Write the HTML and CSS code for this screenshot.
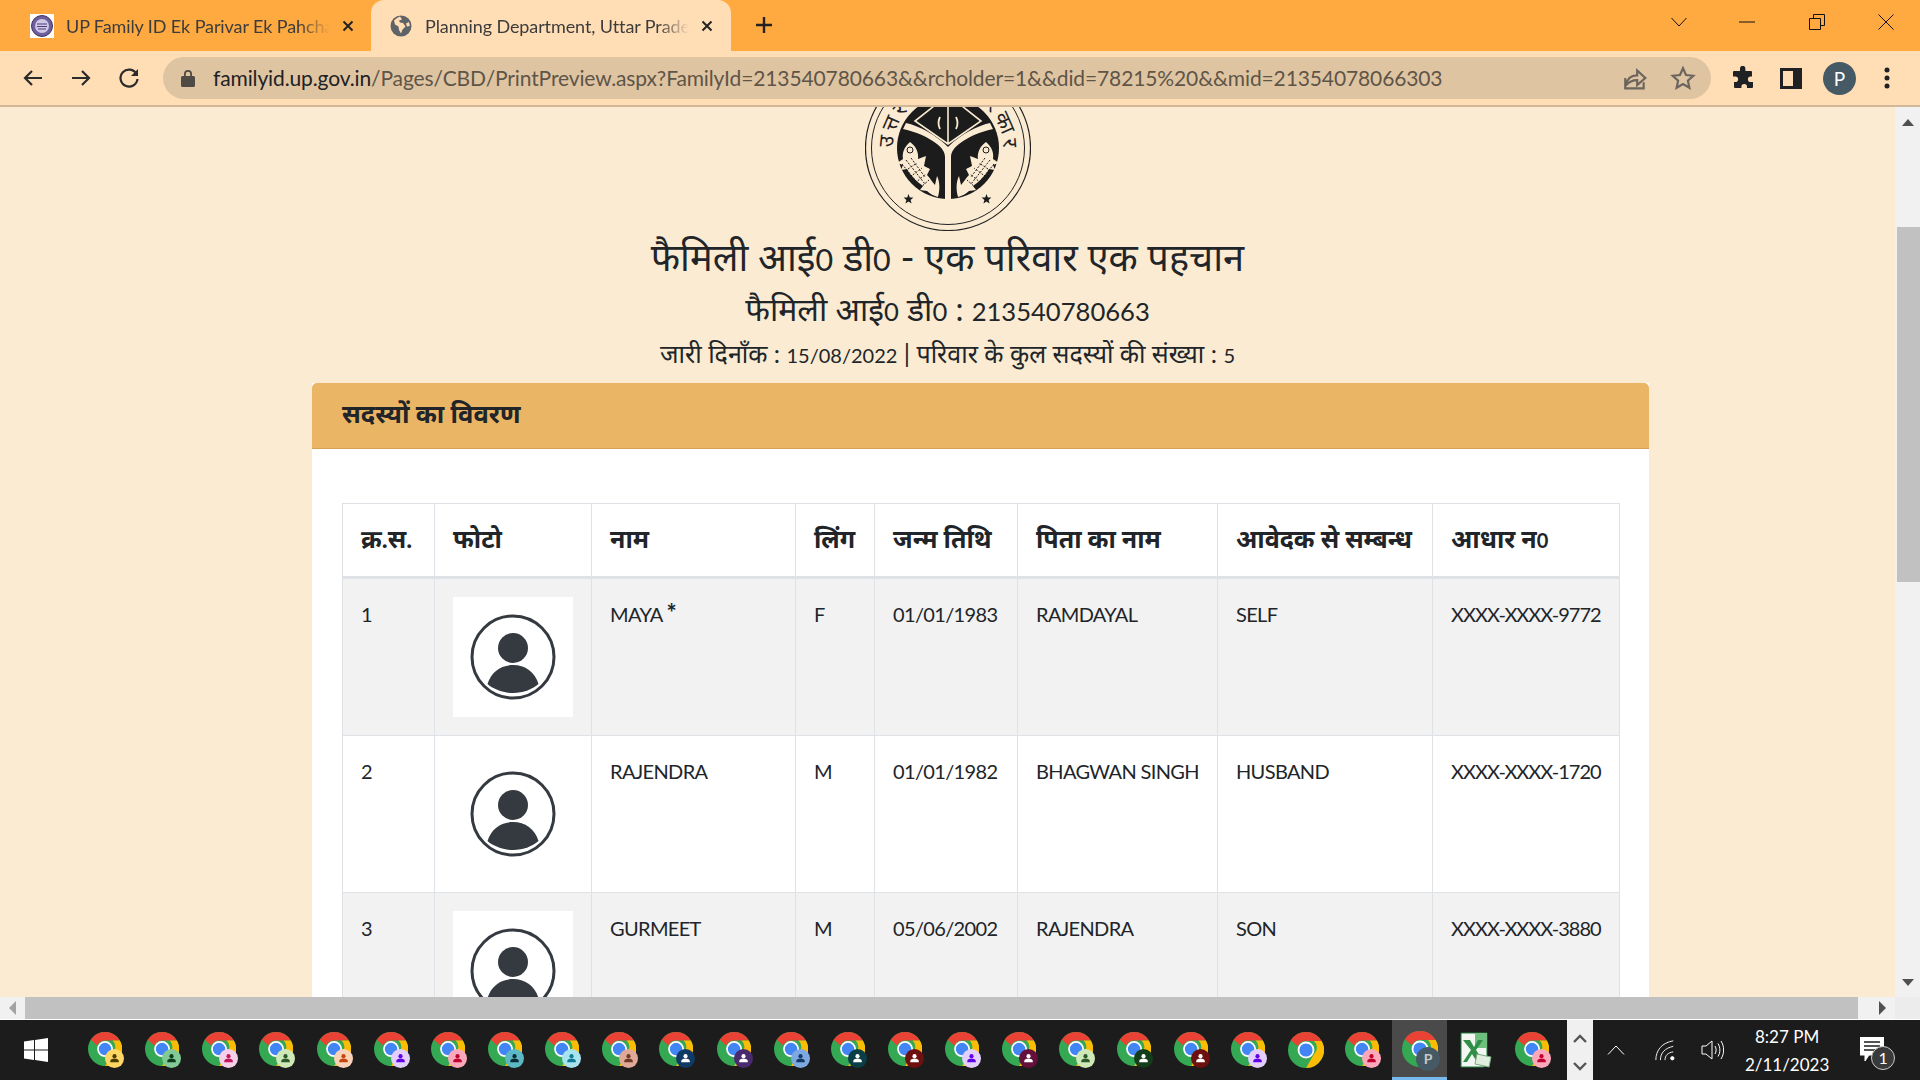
FILE: index.html
```html
<!DOCTYPE html>
<html lang="hi">
<head>
    <meta charset="UTF-8">
    <title>Planning Department, Uttar Pradesh</title>
    <link rel="stylesheet" href="styles.css">
</head>
<body>
    <svg class="defs" width="0" height="0">
        <symbol id="chrome" viewBox="0 0 36 36">
            <circle cx="18" cy="18" r="18" fill="#34a853"/>
            <path d="M18 0a18 18 0 0 1 15.600 9H18a9 9 0 0 0-8.200 5.200L2.900 8.200A18 18 0 0 1 18 0z" fill="#ea4335"/>
            <path d="M33.600 9A18 18 0 0 1 18 36l7.800-13.500A9 9 0 0 0 26 9z" fill="#fbbc04"/>
            <circle cx="18" cy="18" r="8.400" fill="#fff"/>
            <circle cx="18" cy="18" r="6.600" fill="#4285f4"/>
        </symbol>
        <symbol id="badged" viewBox="0 0 38 38">
            <use href="#chrome" width="36" height="36"/>
            <circle class="badge-bg" cx="28" cy="28" r="10"/>
            <circle class="badge-ink" cx="28" cy="25.500" r="2.200"/>
            <path class="badge-ink" d="M23.500 32v-1.500c0-1.500 2-2.500 4.500-2.500s4.500 1 4.500 2.500V32z"/>
        </symbol>
        <symbol id="person" viewBox="0 0 120 120">
            <circle cx="60" cy="60" r="41" fill="#fff" stroke="#343a40" stroke-width="3"/>
            <ellipse cx="60" cy="51" rx="15" ry="15" fill="#343a40"/>
            <path d="M34.500 87C38 75 48 68 60 68s22 7 25.500 19C80 92 70 96 60 96s-20-4-25.500-9z" fill="#343a40"/>
        </symbol>
        <symbol id="fish" viewBox="0 0 166 166">
            <path d="M45 77c6 4 9 11 8 17l8-3-2 10 6 3-3 6c3 3 6 8 8 10l2-9c3 6 3 14 1 21-4-1-8-3-11-6l-7-1 3-4c-6-4-13-11-16-17l-6 1 2-5-6-2 6-4c-1-6 1-12 7-17z" fill="#faebd2"/>
            <circle cx="45" cy="85" r="3" fill="none" stroke="#1c1c1c" stroke-width="1"/>
            <path d="M41 95l19 24M46 93l14 19M37 99l18 22M40 106l12-8M45 112l12-9M50 118l11-9M55 123l9-8" fill="none" stroke="#1c1c1c" stroke-width="1" stroke-dasharray="2 1.500"/>
        </symbol>
    </svg>

    <div class="tabstrip">
        <div class="tab">
            <svg class="favicon" viewBox="0 0 24 24"><rect width="24" height="24" fill="#fff"/><circle cx="12" cy="12" r="10.500" fill="#6f5f9e" stroke="#3c3560"/><circle cx="12" cy="12" r="7" fill="#cfc8e6"/><path d="M7 10h10M7 12.500h10M8 15h8" stroke="#4a3f7a" stroke-width="1.200"/></svg>
            <span class="tab-title">UP Family ID Ek Parivar Ek Pahchan Patra</span>
            <svg class="tab-close" viewBox="0 0 12 12"><path d="M1.500 1.500l9 9M10.500 1.500l-9 9"/></svg>
        </div>
        <div class="tab tab-active">
            <svg class="favicon" viewBox="0 0 24 24"><circle cx="12" cy="12" r="10.500" fill="#5f6368"/><path d="M11 2.500C8 4 6.500 5 5 6.500l1 4 3.500 2 .5 3.500 2 3.500 1.500-4 3-3-2.500-3.500-3-.5L10 6.500l3-1zM20 8l-3 1.500 1 3 2.800-.5z" fill="#ffddb5"/></svg>
            <span class="tab-title">Planning Department, Uttar Pradesh</span>
            <svg class="tab-close" viewBox="0 0 12 12"><path d="M1.500 1.500l9 9M10.500 1.500l-9 9"/></svg>
        </div>
        <svg class="new-tab" viewBox="0 0 18 18"><path d="M9 1v16M1 9h16"/></svg>
        <div class="window-btns">
            <svg class="win-chevron" viewBox="0 0 16 10"><path d="M.500 1l7.500 8 7.500-8"/></svg>
            <svg class="win-min" viewBox="0 0 16 2"><path d="M0 1h16"/></svg>
            <svg class="win-restore" viewBox="0 0 16 16"><path d="M.500 4.500h11v11H.500zM4.500 4.500V.500h11v11h-4"/></svg>
            <svg class="win-close" viewBox="0 0 16 16"><path d="M.500.500l15 15M15.500.500l-15 15"/></svg>
        </div>
    </div>

    <div class="toolbar">
        <svg class="nav-icon" viewBox="0 0 24 24"><path d="M21 12H4M11 5l-7 7 7 7"/></svg>
        <svg class="nav-icon" viewBox="0 0 24 24"><path d="M3 12h17M13 5l7 7-7 7"/></svg>
        <svg class="nav-icon" viewBox="0 0 24 24"><path d="M19.500 8A8.500 8.500 0 1 0 20.500 13"/><path class="solid" d="M21 3v7h-7z"/></svg>
        <div class="omnibox">
            <svg class="lock" viewBox="0 0 14 18"><path d="M3 7V5a4 4 0 0 1 8 0v2h1.500A1.500 1.500 0 0 1 14 8.500v8a1.500 1.500 0 0 1-1.500 1.500h-11A1.500 1.500 0 0 1 0 16.500v-8A1.500 1.500 0 0 1 1.500 7zm1.800 0h4.400V5a2.200 2.200 0 0 0-4.400 0z"/></svg>
            <span class="url"><b>familyid.up.gov.in</b>/Pages/CBD/PrintPreview.aspx?FamilyId=213540780663&amp;&amp;rcholder=1&amp;&amp;did=78215%20&amp;&amp;mid=21354078066303</span>
            <svg class="omni-icon" viewBox="0 0 24 24"><path d="M3 12v9.500h17V16M3.500 19c1-6 5-9.500 10.500-9.500V5l7.500 7-7.500 6.500V14c-4 0-7.500 1.500-10.500 5z"/></svg>
            <svg class="omni-icon" viewBox="0 0 24 24"><path d="M12 3l2.800 6.200 6.700.7-5 4.500 1.400 6.600L12 17.600 6.100 21l1.400-6.600-5-4.500 6.700-.7z"/></svg>
        </div>
        <svg class="ext-icon" viewBox="0 0 24 24"><path d="M9 2.500a2.700 2.700 0 0 1 5.400 0V5H20a1 1 0 0 1 1 1v4.500h-1.300a2.800 2.800 0 0 0 0 5.600H22V21a1 1 0 0 1-1 1h-5v-1.300a2.800 2.800 0 0 0-5.600 0V22H4a1 1 0 0 1-1-1v-5h1.300a2.800 2.800 0 0 0 0-5.600H2V6a1 1 0 0 1 1-1h6z"/></svg>
        <svg class="panel-icon" viewBox="0 0 22 21"><path fill-rule="evenodd" d="M0 0h22v21H0zM3 3v15h10V3z"/></svg>
        <span class="avatar">P</span>
        <svg class="dots" viewBox="0 0 6 22"><circle cx="3" cy="3" r="2.500"/><circle cx="3" cy="11" r="2.500"/><circle cx="3" cy="19" r="2.500"/></svg>
    </div>

    <div class="viewport">
        <div class="page">
            <div class="head">
                <svg class="emblem" viewBox="0 0 166 166">
                    <defs><path id="ring" d="M28 83a55 55 0 1 1 110 0"/></defs>
                    <circle cx="83" cy="83" r="82.500" fill="none" stroke="#222" stroke-width="1.200"/>
                    <circle cx="83" cy="83" r="76.500" fill="none" stroke="#222" stroke-width="1"/>
                    <text class="emblem-text"><textPath href="#ring" startOffset="50%" text-anchor="middle" textLength="172">उत्तर प्रदेश सरकार</textPath></text>
                    <circle cx="83" cy="83" r="51" fill="#1c1c1c"/>
                    <path d="M80 134V92c0-5-3-9-8-13-9-7-20-12-34-15l3-6c13 3 29 11 42 24 13-13 29-21 42-24l3 6c-14 3-25 8-34 15-5 4-8 8-8 13v42z" fill="#faebd2"/>
                    <path d="M83 79L50 56l33-26 33 26zM83 30v49" fill="none" stroke="#faebd2" stroke-width="1.600"/>
                    <path d="M75 52c-2 4-2 8 0 12M91 52c2 4 2 8 0 12" fill="none" stroke="#faebd2" stroke-width="1.800"/>
                    <use href="#fish" width="166" height="166"/>
                    <use href="#fish" width="166" height="166" transform="matrix(-1 0 0 1 166 0)"/>
                    <path d="M43.500 129l1.300 3.400 3.600.200-2.800 2.300 1 3.500-3.100-2-3.100 2 1-3.500-2.800-2.300 3.600-.200zM121.500 129l1.300 3.400 3.600.200-2.800 2.300 1 3.500-3.100-2-3.100 2 1-3.500-2.800-2.300 3.600-.200z" fill="#1c1c1c"/>
                </svg>
                <h1 class="title">फैमिली आई<span class="lat">0</span> डी<span class="lat">0</span> - एक परिवार एक पहचान</h1>
                <h2 class="subtitle">फैमिली आई<span class="lat">0</span> डी<span class="lat">0</span> : <span class="lat">213540780663</span></h2>
                <h3 class="issue">जारी दिनाँक : <span class="lat">15/08/2022</span> | परिवार के कुल सदस्यों की संख्या : <span class="lat">5</span></h3>
            </div>

            <div class="card">
                <div class="card-header">सदस्यों का विवरण</div>
                <div class="card-body">
                    <table class="members">
                        <thead>
                            <tr>
                                <th class="c-no">क्र.स.</th>
                                <th class="c-photo">फोटो</th>
                                <th class="c-name">नाम</th>
                                <th class="c-sex">लिंग</th>
                                <th class="c-dob">जन्म तिथि</th>
                                <th class="c-father">पिता का नाम</th>
                                <th class="c-rel">आवेदक से सम्बन्ध</th>
                                <th class="c-aadhaar">आधार न<span class="lat">0</span></th>
                            </tr>
                        </thead>
                        <tbody>
                            <tr>
                                <td>1</td>
                                <td><svg class="photo"><use href="#person"/></svg></td>
                                <td>MAYA <b class="star">*</b></td>
                                <td>F</td>
                                <td>01/01/1983</td>
                                <td>RAMDAYAL</td>
                                <td>SELF</td>
                                <td class="aadhaar">XXXX-XXXX-9772</td>
                            </tr>
                            <tr>
                                <td>2</td>
                                <td><svg class="photo"><use href="#person"/></svg></td>
                                <td>RAJENDRA</td>
                                <td>M</td>
                                <td>01/01/1982</td>
                                <td>BHAGWAN SINGH</td>
                                <td>HUSBAND</td>
                                <td class="aadhaar">XXXX-XXXX-1720</td>
                            </tr>
                            <tr>
                                <td>3</td>
                                <td><svg class="photo"><use href="#person"/></svg></td>
                                <td>GURMEET</td>
                                <td>M</td>
                                <td>05/06/2002</td>
                                <td>RAJENDRA</td>
                                <td>SON</td>
                                <td class="aadhaar">XXXX-XXXX-3880</td>
                            </tr>
                        </tbody>
                    </table>
                </div>
            </div>
        </div>
        <div class="vscroll">
            <span class="arrow-up"></span>
            <div class="vthumb"></div>
            <span class="arrow-down"></span>
        </div>
    </div>

    <div class="hscroll">
        <span class="arrow-left"></span>
        <div class="hthumb"></div>
        <span class="arrow-right"></span>
        <div class="corner"></div>
    </div>

    <div class="taskbar">
        <svg class="win-logo" viewBox="0 0 24 24"><path d="M0 3.400l10-1.400v9.400H0zM11 1.900L24 0v11.400H11zM0 12.600h10V22L0 20.600zM11 12.600h13V24l-13-1.900z"/></svg>
        <div class="apps">
            <svg class="app b-yellow"><use href="#badged"/></svg>
            <svg class="app b-green"><use href="#badged"/></svg>
            <svg class="app b-pink"><use href="#badged"/></svg>
            <svg class="app b-lime"><use href="#badged"/></svg>
            <svg class="app b-peach"><use href="#badged"/></svg>
            <svg class="app b-lav"><use href="#badged"/></svg>
            <svg class="app b-rose"><use href="#badged"/></svg>
            <svg class="app b-teal"><use href="#badged"/></svg>
            <svg class="app b-sky"><use href="#badged"/></svg>
            <svg class="app b-tan"><use href="#badged"/></svg>
            <svg class="app b-navy"><use href="#badged"/></svg>
            <svg class="app b-plum"><use href="#badged"/></svg>
            <svg class="app b-blue"><use href="#badged"/></svg>
            <svg class="app b-deep"><use href="#badged"/></svg>
            <svg class="app b-red"><use href="#badged"/></svg>
            <svg class="app b-lav"><use href="#badged"/></svg>
            <svg class="app b-wine"><use href="#badged"/></svg>
            <svg class="app b-lime"><use href="#badged"/></svg>
            <svg class="app b-forest"><use href="#badged"/></svg>
            <svg class="app b-red"><use href="#badged"/></svg>
            <svg class="app b-lav"><use href="#badged"/></svg>
            <svg class="app"><use href="#chrome"/></svg>
            <svg class="app b-rose"><use href="#badged"/></svg>
        </div>
        <div class="app-active">
            <svg class="app"><use href="#chrome"/></svg>
            <span class="active-badge">P</span>
        </div>
        <svg class="excel" viewBox="0 0 36 36">
            <path d="M4 1h26v26l-3 8H4z" fill="#f2f7f2" stroke="#1e7a3c"/>
            <path d="M18 1h12v15H18z" fill="#6fbf7f"/>
            <path d="M6 8h7l4 7 4-7h5l-7 10 8 12h-7l-5-8-5 8H6l8-12z" fill="#2f8f46"/>
            <path d="M20 22l14 3-2 10-14-3z" fill="#dfeedd" stroke="#7dab80"/>
        </svg>
        <svg class="app b-rose"><use href="#badged"/></svg>
        <div class="task-scroll">
            <svg viewBox="0 0 14 9"><path d="M1 8l6-6 6 6"/></svg>
            <svg viewBox="0 0 14 9"><path d="M1 1l6 6 6-6"/></svg>
        </div>
        <div class="tray">
            <svg class="tray-chevron" viewBox="0 0 18 10"><path d="M1 9.500l8-8.500 8 8.500"/></svg>
            <svg class="tray-wifi" viewBox="0 0 24 24"><path d="M2 23C2 12 9 4 21 2M7 23c0-8 5-13 14-15M12 23c0-5 3-8 9-9"/><circle cx="20" cy="21" r="1.800" class="solid"/></svg>
            <svg class="tray-sound" viewBox="0 0 24 24"><path d="M2 8h4l6-5v18l-6-5H2zM15 8c1.500 2.500 1.500 5.500 0 8M18 5.500c2.500 4 2.500 9 0 13M21 3c3.500 5.500 3.500 12.500 0 18"/></svg>
            <div class="clock">
                <span>8:27 PM</span>
                <span>2/11/2023</span>
            </div>
            <div class="notify">
                <svg viewBox="0 0 24 26"><path d="M0 0h24v18H9l-4 6v-6H0z" fill="#fff"/><path d="M4 5h16M4 9h16M4 13h12" stroke="#1c1c1c" stroke-width="1.400"/></svg>
                <span class="notify-count">1</span>
            </div>
        </div>
    </div>
</body>
</html>
```

FILE: styles.css
```css
* {
    box-sizing: border-box;
}
html, body {
    margin: 0;
    height: 100%;
    overflow: hidden;
}
body {
    display: flex;
    flex-direction: column;
    font-family: Lato, "Noto Sans", "Noto Sans Devanagari", sans-serif;
    color: #212529;
    background: #faebd2;
}
.defs {
    position: absolute;
}
svg {
    flex: none;
    display: block;
}

/* browser tabs */
.tabstrip {
    height: 51px;
    flex: none;
    background: #ffaa40;
    display: flex;
    align-items: stretch;
    padding-left: 16px;
    position: relative;
}
.tab {
    width: 355px;
    display: flex;
    align-items: center;
    padding-left: 14px;
    color: #3c3c3c;
    font-size: 18px;
    letter-spacing: -0.1px;
}
.tab-active {
    width: 360px;
    background: #ffddb5;
    border-radius: 13px 13px 0 0;
    padding-left: 18px;
}
.favicon {
    width: 24px;
    height: 24px;
    margin-right: 12px;
}
.tab-title {
    width: 264px;
    white-space: nowrap;
    overflow: hidden;
    -webkit-mask-image: linear-gradient(to right, #000 88%, transparent);
    mask-image: linear-gradient(to right, #000 88%, transparent);
}
.tab-close {
    width: 12px;
    height: 12px;
    margin-left: 12px;
    fill: none;
    stroke: #222;
    stroke-width: 2;
}
.new-tab {
    width: 18px;
    height: 18px;
    margin: 16px 0 0 24px;
    fill: none;
    stroke: #222;
    stroke-width: 2.400;
}
.window-btns {
    margin-left: auto;
    display: flex;
    align-items: center;
    padding-bottom: 8px;
}
.window-btns svg {
    fill: none;
    stroke: #111;
    stroke-width: 1;
}
.win-chevron {
    width: 16px;
    height: 10px;
}
.win-min {
    width: 16px;
    height: 2px;
    margin-left: 52px;
}
.win-restore {
    width: 16px;
    height: 16px;
    margin-left: 54px;
}
.win-close {
    width: 16px;
    height: 16px;
    margin: 0 26px 0 53px;
}

/* address bar */
.toolbar {
    height: 56px;
    flex: none;
    background: #ffddb5;
    border-bottom: 2px solid #d2b899;
    display: flex;
    align-items: center;
    padding-left: 21px;
}
.nav-icon {
    width: 24px;
    height: 24px;
    margin-right: 24px;
    fill: none;
    stroke: #2b2b2b;
    stroke-width: 2.200;
}
.nav-icon .solid {
    fill: #2b2b2b;
    stroke: none;
}
.omnibox {
    width: 1548px;
    height: 42px;
    margin-left: -2px;
    background: #dfc4a2;
    border-radius: 21px;
    display: flex;
    align-items: center;
    padding-left: 18px;
}
.lock {
    width: 14px;
    height: 18px;
    fill: #4f4a44;
    margin-right: 18px;
}
.url {
    width: 1387px;
    padding-bottom: 1px;
    font-size: 21px;
    letter-spacing: -0.12px;
    color: #5e5548;
    white-space: nowrap;
}
.url b {
    font-weight: 400;
    color: #202124;
}
.omni-icon {
    width: 26px;
    height: 26px;
    margin-left: 22px;
    fill: none;
    stroke: #6b655e;
    stroke-width: 2;
}
.ext-icon {
    width: 24px;
    height: 24px;
    margin-left: 20px;
    fill: #202124;
}
.panel-icon {
    width: 22px;
    height: 21px;
    margin-left: 25px;
    fill: #202124;
}
.avatar {
    width: 33px;
    height: 33px;
    margin-left: 21px;
    border-radius: 50%;
    background: #455a64;
    color: #fff;
    font-size: 19px;
    line-height: 33px;
    text-align: center;
}
.dots {
    width: 6px;
    height: 22px;
    margin-left: 28px;
    fill: #202124;
}

/* page content, scrolled down a little */
.viewport {
    flex: 1;
    min-height: 0;
    display: flex;
}
.page {
    flex: 1;
    min-width: 0;
    overflow: hidden;
    background: #faebd2;
}
.head {
    text-align: center;
}
.emblem {
    width: 166px;
    height: 166px;
    margin: -42px auto -1px;
}
.emblem-text {
    font-size: 21px;
    fill: #222;
}
.lat {
    font-size: 0.8em;
}
.title {
    margin: 0;
    font-size: 38px;
    font-weight: 400;
    line-height: 52px;
}
.subtitle {
    margin: 1px 0 0;
    font-size: 32px;
    font-weight: 400;
    line-height: 46px;
}
.issue {
    margin: -1px 0 0;
    font-size: 25px;
    font-weight: 400;
    line-height: 40px;
}
.card {
    width: 1337px;
    margin: 8px 0 0 312px;
    background: #fff;
}
.card-header {
    height: 66px;
    padding: 0 30px 8px;
    background: #eab665;
    border-bottom: 1px solid #d5a055;
    border-radius: 5px 5px 0 0;
    font-size: 25.500px;
    font-weight: 700;
    line-height: 60px;
}
.card-body {
    padding: 54px 30px 0;
}
.members {
    width: 100%;
    border-collapse: collapse;
    table-layout: fixed;
    font-size: 20px;
    white-space: nowrap;
}
.members th, .members td {
    border: 1px solid #dee2e6;
    padding: 18px;
    text-align: left;
    vertical-align: top;
    font-weight: 400;
}
.members th {
    height: 74px;
    padding-top: 16px;
    font-size: 25px;
    font-weight: 700;
    line-height: 36px;
    border-bottom: 3px solid #dee2e6;
}
.members td {
    height: 157px;
    padding-top: 17px;
    line-height: 36px;
    letter-spacing: -0.65px;
}
.members td.aadhaar {
    letter-spacing: -1px;
}
.star {
    font-size: 24px;
    line-height: 20px;
}
.members tbody tr:nth-child(odd) {
    background: #f2f2f2;
}
.members td:nth-child(2) {
    padding-top: 18px;
}
.c-no { width: 92px; }
.c-photo { width: 157px; }
.c-name { width: 204px; }
.c-sex { width: 79px; }
.c-dob { width: 143px; }
.c-father { width: 200px; }
.c-rel { width: 215px; }
.c-aadhaar { width: 187px; }
.photo {
    width: 120px;
    height: 120px;
    background: #fff;
}

/* page scrollbars */
.vscroll {
    width: 25px;
    flex: none;
    background: #f1f1f1;
    position: relative;
}
.vthumb {
    position: absolute;
    top: 120px;
    right: 0;
    width: 23px;
    height: 355px;
    background: #c1c1c1;
}
.arrow-up, .arrow-down {
    position: absolute;
    right: 6px;
    width: 0;
    height: 0;
    border: 6px solid transparent;
}
.arrow-up {
    top: 6px;
    border-bottom: 7px solid #505050;
}
.arrow-down {
    bottom: 5px;
    border-top: 7px solid #505050;
}
.hscroll {
    height: 23px;
    flex: none;
    background: #f1f1f1;
    border-bottom: 1px solid #fff;
    display: flex;
    align-items: center;
}
.hthumb {
    width: 1833px;
    height: 22px;
    margin-left: 9px;
    background: #c1c1c1;
}
.arrow-left, .arrow-right {
    width: 0;
    height: 0;
    border: 7px solid transparent;
}
.arrow-left {
    margin-left: 9px;
    border-right: 7px solid #a3a3a3;
    border-left-width: 0;
}
.arrow-right {
    margin-left: 21px;
    border-left: 7px solid #505050;
    border-right-width: 0;
}
.corner {
    flex: 1;
    margin-left: 9px;
    height: 22px;
    background: #ececec;
}

/* windows taskbar */
.taskbar {
    height: 60px;
    flex: none;
    background: #1c1c1c;
    display: flex;
    align-items: center;
    color: #fff;
}
.win-logo {
    width: 24px;
    height: 24px;
    margin-left: 24px;
    fill: #fff;
}
.apps {
    display: flex;
    margin-left: 40px;
    gap: 21.150px;
}
.app {
    width: 36px;
    height: 36px;
    overflow: visible;
}
.badge-bg {
    fill: var(--badge);
}
.badge-ink {
    fill: var(--ink);
}
.b-yellow { --badge: #fdd663; --ink: #4d3b00; }
.b-green { --badge: #81c995; --ink: #0d3d1c; }
.b-pink { --badge: #f8cfe8; --ink: #c2185b; }
.b-lime { --badge: #cfe8b8; --ink: #2d5a2d; }
.b-peach { --badge: #fad2b8; --ink: #c5450f; }
.b-lav { --badge: #e2cffb; --ink: #6200ea; }
.b-rose { --badge: #fba9ba; --ink: #c2002f; }
.b-teal { --badge: #5bb8c4; --ink: #0b2b36; }
.b-sky { --badge: #a8e4f0; --ink: #127c95; }
.b-tan { --badge: #e0a896; --ink: #6d3a2a; }
.b-navy { --badge: #0f3a66; --ink: #fff; }
.b-plum { --badge: #4a2a6e; --ink: #fff; }
.b-blue { --badge: #7fa8e0; --ink: #123a66; }
.b-deep { --badge: #0a3f45; --ink: #fff; }
.b-red { --badge: #6e1010; --ink: #fff; }
.b-wine { --badge: #65103a; --ink: #fff; }
.b-forest { --badge: #143d1a; --ink: #fff; }
.app-active {
    width: 55px;
    height: 60px;
    margin-left: 11px;
    background: #4a4a4a;
    border-bottom: 3px solid #76b9ed;
    display: flex;
    align-items: center;
    justify-content: center;
    position: relative;
}
.active-badge {
    position: absolute;
    left: 24px;
    top: 27px;
    width: 24px;
    height: 24px;
    border-radius: 50%;
    background: #455a64;
    color: #c8c8c8;
    font-size: 14px;
    font-weight: 700;
    line-height: 24px;
    text-align: center;
}
.excel {
    width: 36px;
    height: 36px;
    margin-left: 10px;
}
.taskbar > .app {
    margin-left: 22px;
}
.task-scroll {
    width: 26px;
    height: 60px;
    margin-left: 16px;
    background: #f0f0f0;
    display: flex;
    flex-direction: column;
    justify-content: space-between;
    align-items: center;
    padding: 14px 0 9px;
}
.task-scroll svg {
    width: 14px;
    height: 9px;
    fill: none;
    stroke: #555;
    stroke-width: 2.400;
}
.tray {
    flex: 1;
    display: flex;
    align-items: center;
    padding-left: 14px;
}
.tray svg {
    fill: none;
    stroke: #fff;
    stroke-width: 1;
}
.tray-chevron {
    width: 18px;
    height: 10px;
}
.tray-wifi {
    width: 22px;
    height: 22px;
    margin-left: 29px;
}
.tray-wifi .solid {
    fill: #fff;
}
.tray-sound {
    width: 24px;
    height: 24px;
    margin-left: 24px;
}
.clock {
    width: 110px;
    margin-left: 8px;
    padding-top: 2px;
    display: flex;
    flex-direction: column;
    gap: 6px;
    align-items: center;
    font-size: 17px;
    line-height: 22px;
}
.notify {
    position: relative;
    width: 24px;
    height: 26px;
    margin-left: 18px;
}
.notify-count {
    position: absolute;
    left: 11px;
    top: 9px;
    width: 24px;
    height: 24px;
    border: 1px solid #ccc;
    border-radius: 50%;
    background: #3a3a3a;
    font-size: 16px;
    line-height: 22px;
    text-align: center;
}
```
